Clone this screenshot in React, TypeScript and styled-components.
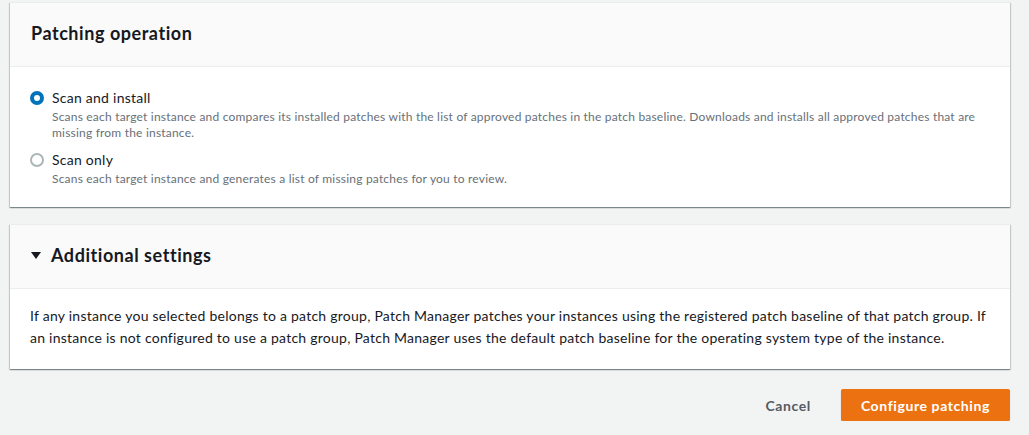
import React, { useState } from "react";
import styled, { createGlobalStyle } from "styled-components";

const Global = createGlobalStyle`
  html, body { margin: 0; padding: 0; background: #f2f3f3; }
  body { font-family: Lato, "Open Sans", sans-serif; color: #16191f; }
  * { box-sizing: border-box; }
`;

const Page = styled.div`
  display: flex;
  flex-direction: column;
  padding: 2px 19px 0 10px;
  width: 1029px;
`;

const Card = styled.section<{ $gap?: number }>`
  background: #fff;
  border-top: 1px solid #eaeded;
  box-shadow: 0 1px 1px 0 rgba(0, 28, 36, 0.3), 1px 1px 1px 0 rgba(0, 28, 36, 0.15),
    -1px 1px 1px 0 rgba(0, 28, 36, 0.15);
  margin-top: ${(p) => p.$gap ?? 0}px;
`;

const CardHeader = styled.header`
  display: flex;
  align-items: center;
  gap: 10px;
  height: 64px;
  padding: 0 21px 4px 21px;
  background: #fafafa;
  border-bottom: 1px solid #eaeded;
`;

const Title = styled.h2`
  margin: 0;
  font-size: 18px;
  font-weight: 700;
  line-height: 22px;
  letter-spacing: 0.55px;
  color: #16191f;
`;

const Caret = styled.span`
  width: 0;
  height: 0;
  border-left: 5px solid transparent;
  border-right: 5px solid transparent;
  border-top: 7px solid #16191f;
  margin-top: 1px;
`;

const Body = styled.div<{ $pt: number }>`
  display: flex;
  flex-direction: column;
  gap: 8px;
  padding: ${(p) => p.$pt}px 20px 20px 20px;
`;

const Option = styled.label`
  display: grid;
  grid-template-columns: 14px 1fr;
  column-gap: 8px;
  cursor: pointer;
`;

const Radio = styled.span<{ $checked: boolean }>`
  width: 14px;
  height: 14px;
  margin-top: 4px;
  border-radius: 50%;
  border: ${(p) => (p.$checked ? "4px solid #0073bb" : "2px solid #aab7b8")};
  background: #fff;
`;

const OptionText = styled.div`
  display: flex;
  flex-direction: column;
`;

const OptionLabel = styled.span`
  font-size: 14px;
  line-height: 22px;
  letter-spacing: 0.25px;
  color: #16191f;
`;

const OptionDesc = styled.span`
  font-size: 12px;
  line-height: 16px;
  letter-spacing: 0.2px;
  color: #687078;
`;

const Paragraph = styled.p`
  margin: 0;
  font-size: 14px;
  line-height: 22px;
  letter-spacing: 0.25px;
  color: #16191f;
`;

const Actions = styled.div`
  display: flex;
  justify-content: flex-end;
  align-items: center;
  gap: 10px;
  margin-top: 20px;
`;

const Button = styled.button<{ $primary?: boolean }>`
  height: 32px;
  padding: 0 20px;
  border: none;
  border-radius: 2px;
  font-family: inherit;
  font-size: 14px;
  font-weight: 700;
  letter-spacing: 0.6px;
  cursor: pointer;
  background: ${(p) => (p.$primary ? "#ec7211" : "transparent")};
  color: ${(p) => (p.$primary ? "#fff" : "#545b64")};
  box-shadow: ${(p) => (p.$primary ? "0 1px 1px 0 rgba(0,28,36,0.3)" : "none")};
`;

const options = [
  {
    id: "install",
    label: "Scan and install",
    desc: "Scans each target instance and compares its installed patches with the list of approved patches in the patch baseline. Downloads and installs all approved patches that are missing from the instance.",
  },
  {
    id: "scan",
    label: "Scan only",
    desc: "Scans each target instance and generates a list of missing patches for you to review.",
  },
];

export default function App() {
  const [value, setValue] = useState("install");
  return (
    <>
      <Global />
      <Page>
        <Card>
          <CardHeader>
            <Title>Patching operation</Title>
          </CardHeader>
          <Body $pt={20}>
            {options.map((o) => (
              <Option key={o.id} onClick={() => setValue(o.id)}>
                <Radio $checked={value === o.id} />
                <OptionText>
                  <OptionLabel>{o.label}</OptionLabel>
                  <OptionDesc>{o.desc}</OptionDesc>
                </OptionText>
              </Option>
            ))}
          </Body>
        </Card>
        <Card $gap={17}>
          <CardHeader>
            <Caret />
            <Title>Additional settings</Title>
          </CardHeader>
          <Body $pt={16}>
            <Paragraph>
              If any instance you selected belongs to a patch group, Patch Manager patches your instances using the
              registered patch baseline of that patch group. If an instance is not configured to use a patch group,
              Patch Manager uses the default patch baseline for the operating system type of the instance.
            </Paragraph>
          </Body>
        </Card>
        <Actions>
          <Button>Cancel</Button>
          <Button $primary>Configure patching</Button>
        </Actions>
      </Page>
    </>
  );
}
